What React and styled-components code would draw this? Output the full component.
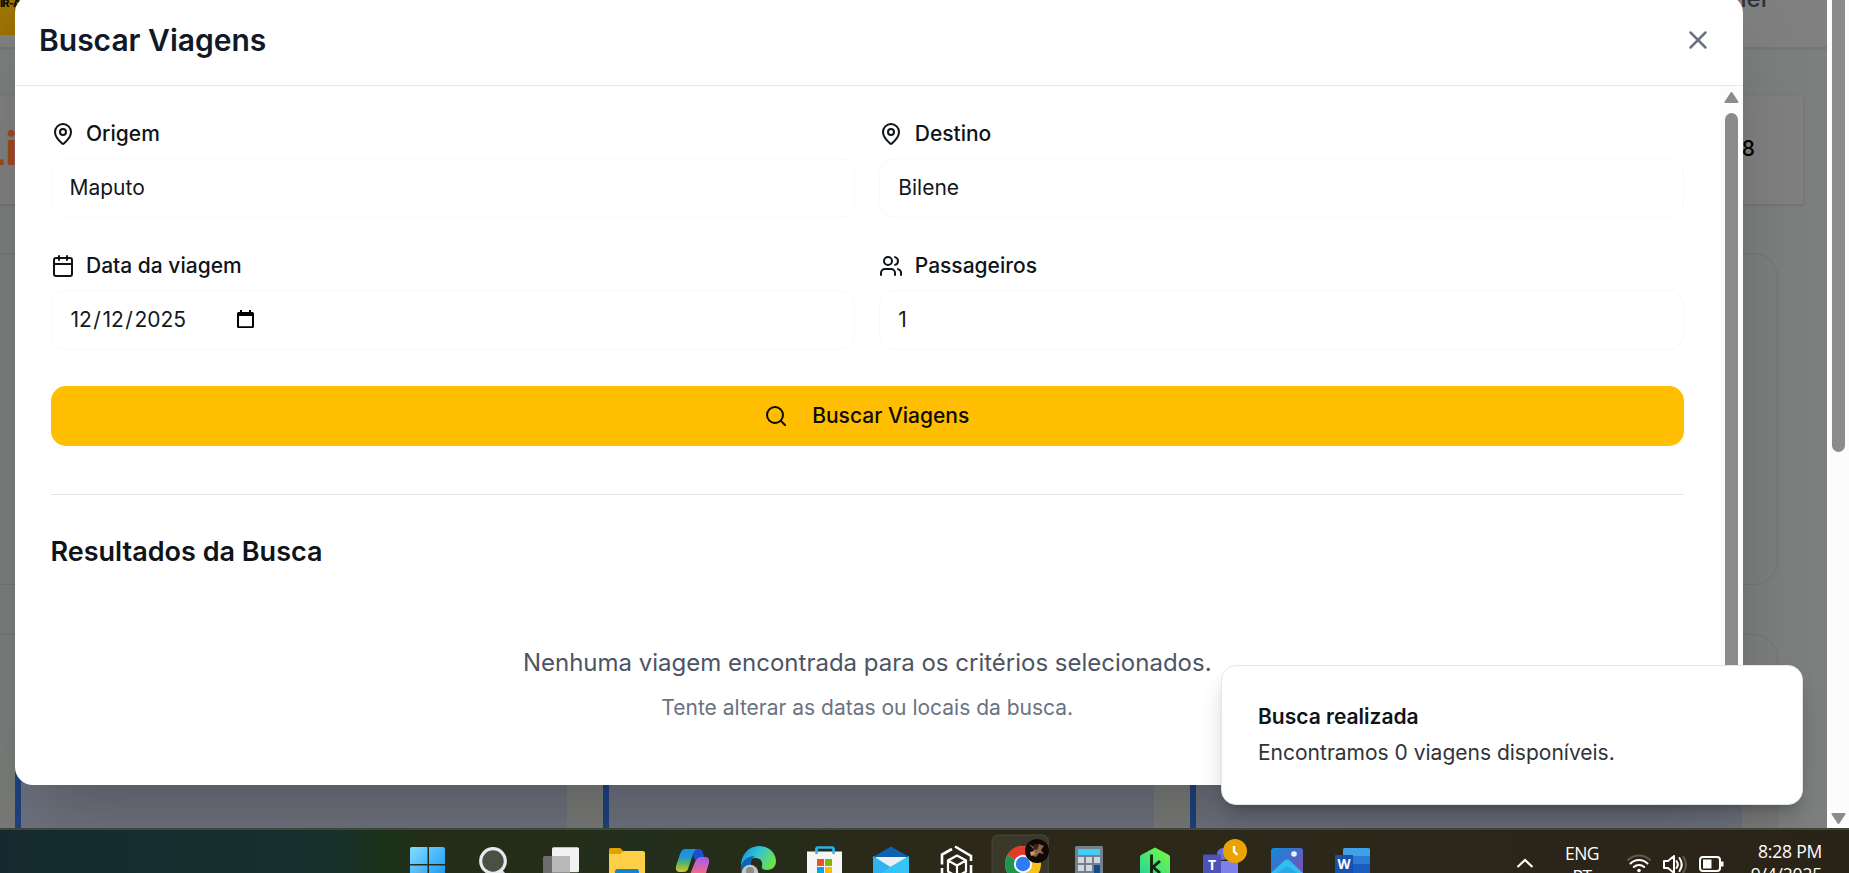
import React from "react";
import styled, { createGlobalStyle } from "styled-components";
import { MapPin, Calendar, Users, Search, X } from "lucide-react";

const GlobalStyle = createGlobalStyle`
  *, *::before, *::after { box-sizing: border-box; }
  html, body { margin: 0; padding: 0; overflow: hidden; }
  body { font-family: Inter, "Liberation Sans", sans-serif; color: #0f1419; background: #7c7f7d; }
  h2, h3, p { margin: 0; }
`;

const Desktop = styled.div`
  position: relative;
  display: flex;
  flex-direction: column;
  width: 1849px;
  height: 873px;
  overflow: hidden;
`;

const BrowserView = styled.div`
  position: relative;
  display: flex;
  height: 828px;
  overflow: hidden;
`;

/* ---------- dimmed page behind the dialog ---------- */

const Page = styled.main`
  display: flex;
  flex-direction: column;
  flex: 1;
  height: 828px;
  background: #7c7f7d;
  overflow: hidden;
`;

const SiteHeader = styled.header`
  display: flex;
  justify-content: space-between;
  flex: none;
  height: 48px;
  background: #808080;
  border-bottom: 1px solid #757776;
  box-shadow: 0 1px 2px rgba(0, 0, 0, 0.1);
`;

const BrandStrip = styled.div`
  display: flex;
  width: 40px;
  height: 35px;
  background: linear-gradient(120deg, #a07808, #946800);
  color: #140e00;
  font-size: 11px;
  font-weight: 800;
  line-height: 6px;
  letter-spacing: -0.8px;
  overflow: hidden;
`;

const HeaderUser = styled.span`
  margin-right: 57px;
  margin-top: -14px;
  height: 30px;
  font-size: 24px;
  font-weight: 500;
  line-height: 26px;
  color: #303131;
`;

const StatCard = styled.section`
  display: flex;
  align-items: center;
  justify-content: space-between;
  flex: none;
  height: 108px;
  margin: 48px 24px 49px -30px;
  padding: 0 48px 3px 10px;
  background: #808080;
  box-shadow: 0 1px 3px rgba(0, 0, 0, 0.14);
`;

const StatTitle = styled.span`
  font-size: 45px;
  font-weight: 700;
  line-height: 60px;
  letter-spacing: -0.3px;
  color: #a3491a;
`;

const StatValue = styled.span`
  font-size: 21px;
  font-weight: 500;
  color: #000;
`;

const Panel = styled.section`
  flex: none;
  height: ${(p) => p.$height}px;
  margin: 0 49px 49px -30px;
  border: 1px solid #737574;
  border-radius: 24px;
`;

const TripPanel = styled(Panel)`
  display: flex;
  align-items: flex-end;
  gap: 36px;
  padding-left: 44px;
  background: linear-gradient(#7c7f7d 40%, #787976);
`;

const TripCard = styled.div`
  flex: none;
  width: ${(p) => p.$width}px;
  height: 180px;
  border-left: 6px solid #1e427e;
  background: #6e727e;
`;

/* ---------- scrollbars ---------- */

const Scrollbar = styled.div`
  display: flex;
  flex-direction: column;
  align-items: center;
  justify-content: space-between;
  flex: none;
  width: ${(p) => p.$width}px;
  padding: ${(p) => p.$padding};
  background: #fcfcfc;
`;

const Thumb = styled.div`
  width: 13px;
  height: ${(p) => p.$height}px;
  border-radius: ${(p) => p.$radius};
  background: #8b8b8b;
`;

/* ---------- dialog ---------- */

const Dialog = styled.div`
  position: absolute;
  left: 15px;
  top: -5px;
  display: flex;
  flex-direction: column;
  width: 1728px;
  height: 790px;
  border-radius: 18px;
  background: #fff;
  box-shadow: 0 37px 75px -18px rgba(0, 0, 0, 0.25);
  overflow: hidden;
`;

const DialogHeader = styled.header`
  display: flex;
  align-items: center;
  justify-content: space-between;
  flex: none;
  height: 91px;
  padding: 0 30px 0 24px;
  border-bottom: 1px solid #e5e7eb;
`;

const DialogTitle = styled.h2`
  font-size: 30px;
  font-weight: 600;
  line-height: 42px;
  color: #111827;
`;

const CloseButton = styled.button`
  display: flex;
  padding: 0;
  border: 0;
  background: none;
  color: #6b7280;
`;

const DialogBody = styled.div`
  display: flex;
  flex: 1;
  min-height: 0;
`;

const DialogContent = styled.div`
  flex: 1;
  padding: 36px 36px 0 35.5px;
`;

const Form = styled.form`
  display: grid;
  grid-template-columns: 1fr 1fr;
  gap: 36px 24px;
`;

const Field = styled.div`
  display: flex;
  flex-direction: column;
  gap: 12px;
`;

const Label = styled.label`
  display: flex;
  align-items: center;
  gap: 11.5px;
  height: 24px;
  font-size: 21px;
  font-weight: 500;
  line-height: 24px;
`;

const Input = styled.div`
  display: flex;
  align-items: center;
  height: 60px;
  padding: 0 18px;
  border: 1px solid #f7f8f9;
  border-radius: 15px;
  font-size: 21px;
  line-height: 30px;
  color: #14181d;
`;

const DateText = styled.span`
  width: 166px;
  margin-left: 1px;
  white-space: nowrap;
`;

const Slash = styled.span`
  margin: 0 1.5px;
`;

const PickerIcon = styled.svg`
  margin-bottom: 2px;
`;

const SubmitButton = styled.button`
  display: flex;
  align-items: center;
  justify-content: center;
  gap: 24px;
  grid-column: 1 / -1;
  height: 60px;
  padding: 0 7px 0 6px;
  border: 0;
  border-radius: 15px;
  background: #ffbf00;
  color: #0c0a02;
  font: 500 21px/30px Inter, "Liberation Sans", sans-serif;
`;

const Results = styled.section`
  margin-top: 48px;
  padding-top: 36px;
  border-top: 1px solid #e1e8ed;
`;

const ResultsTitle = styled.h3`
  font-size: 27px;
  font-weight: 600;
  line-height: 42px;
`;

const EmptyState = styled.div`
  display: flex;
  flex-direction: column;
  align-items: center;
  gap: 12px;
  padding-top: 72px;
`;

const EmptyTitle = styled.p`
  font-size: 24px;
  line-height: 36px;
  color: #4b5563;
`;

const EmptyHint = styled.p`
  font-size: 21px;
  line-height: 30px;
  color: #6b7280;
`;

/* ---------- toast ---------- */

const Toast = styled.div`
  position: absolute;
  left: 1221px;
  top: 665px;
  display: flex;
  flex-direction: column;
  justify-content: center;
  gap: 6px;
  width: 582px;
  height: 140px;
  padding: 0 36px;
  border: 1px solid #e1e8ed;
  border-radius: 15px;
  background: #fff;
  box-shadow: 0 15px 23px -4px rgba(0, 0, 0, 0.2), 0 6px 9px -6px rgba(0, 0, 0, 0.2);
  font-size: 21px;
  line-height: 30px;
`;

const ToastTitle = styled.p`
  font-weight: 600;
`;

const ToastText = styled.p`
  color: #2e3338;
`;

/* ---------- taskbar ---------- */

const Taskbar = styled.footer`
  display: flex;
  justify-content: space-between;
  align-items: flex-start;
  flex: none;
  height: 45px;
  padding: 4px 27px 0 395px;
  border-top: 2px solid #41463a;
  background: linear-gradient(90deg, #142a30 0, #15302d 280px, #18312a 340px, #1b3319 385px, #252c1a 430px, #222f1b 640px, #2b291a 900px, #2c281a 1250px, #2a2318 1849px);
  overflow: hidden;
`;

const AppList = styled.div`
  display: flex;
`;

const AppSlot = styled.div`
  width: 66px;
  height: 39px;
  & > svg { display: block; }
`;

const Tray = styled.div`
  display: flex;
  align-items: flex-start;
  color: #fff;
  font-family: "Open Sans", "Noto Sans", sans-serif;
  font-size: 17.5px;
  line-height: 23px;
`;

const TrayText = styled.div`
  display: flex;
  flex-direction: column;
  align-items: ${(p) => p.$align};
  width: ${(p) => p.$width}px;
  margin-top: ${(p) => p.$top}px;
  letter-spacing: ${(p) => p.$spacing}px;
  white-space: nowrap;
`;

const taskbarApps = [
  {
    name: "start",
    art: (
      <>
        <defs>
          <linearGradient id="win" x1="0" y1="0" x2="1" y2="1">
            <stop offset="0" stopColor="#86dcff" />
            <stop offset="1" stopColor="#0a93f5" />
          </linearGradient>
        </defs>
        <path fill="url(#win)" d="M17 13h15.500v17H15v-15a2 2 0 0 1 2-2zM34 13h14a2 2 0 0 1 2 2v15H34zM15 31.500h17.500v17.500H15zM34 31.500h16v17.500H34z" />
      </>
    ),
  },
  {
    name: "search",
    art: (
      <>
        <path d="M38 36l8 9" stroke="#dfe2e6" strokeWidth="5" />
        <circle cx="32" cy="27" r="12.300" fill="#4b5142" stroke="#e6e9ed" strokeWidth="3.200" />
      </>
    ),
  },
  {
    name: "tasks",
    art: (
      <>
        <rect x="25" y="13.300" width="27" height="25" rx="1.500" fill="#f2f2f2" />
        <rect x="16" y="22" width="27" height="25" rx="1.500" fill="#6c6c6c" />
        <path d="M25 22h18v16.500H25z" fill="#b9b9b9" />
      </>
    ),
  },
  {
    name: "files",
    art: (
      <>
        <path d="M16 15.500a1.500 1.500 0 0 1 1.500-1.500h9.500l4 3.500-3 5H16z" fill="#e0a106" />
        <path d="M16 20h11l4-3h19a2 2 0 0 1 2 2v26H16z" fill="#ffcf48" />
        <path d="M22 39v-1.500a2.500 2.500 0 0 1 2.500-2.500h19a2.500 2.500 0 0 1 2.500 2.500V39z" fill="#1683d0" />
      </>
    ),
  },
  {
    name: "copilot",
    art: (
      <>
        <defs>
          <linearGradient id="cpA" x1="0" y1="0" x2="0" y2="1">
            <stop offset="0" stopColor="#1591ec" />
            <stop offset="0.350" stopColor="#2196cf" />
            <stop offset="0.650" stopColor="#5eb85c" />
            <stop offset="1" stopColor="#e3c42c" />
          </linearGradient>
          <linearGradient id="cpB" x1="0" y1="0" x2="0" y2="1">
            <stop offset="0" stopColor="#a25bf0" />
            <stop offset="1" stopColor="#ff7273" />
          </linearGradient>
        </defs>
        <path d="M30 15h10q3 0 4 4l1.500 4.500H41q-3 0-5 3l-2-6z" fill="#1c4fcc" />
        <path d="M26 15h12q-3 1-4 5l-5 15q-1 3-5 3h-3q-5 0-4-6l4-12q2-5 5-5z" fill="url(#cpA)" />
        <path d="M42 23h4q5 0 4 6l-3 10q-1 4-4 4H26q5-1 6-5l4-10q2-5 6-5z" fill="url(#cpB)" />
      </>
    ),
  },
  {
    name: "edge",
    art: (
      <>
        <defs>
          <linearGradient id="edge" x1="0" y1="0" x2="1" y2="0.400">
            <stop offset="0" stopColor="#128bd8" />
            <stop offset="0.500" stopColor="#30c2d8" />
            <stop offset="1" stopColor="#69e04e" />
          </linearGradient>
        </defs>
        <path d="M16 32a18 19 0 0 1 18-20c11 0 17 8 17 15 0 6-4 9-9 9-4 0-6-2-5-4 1-5-2-8-7-8-7 0-12 5-14 10z" fill="url(#edge)" />
        <path d="M16 31c3-6 8-9 14-9-5 3-5 9-2 20H16z" fill="#0b66b4" />
        <circle cx="25" cy="39" r="8.300" fill="#c5c5c5" />
        <circle cx="25" cy="37" r="4" fill="#8c8c8c" />
      </>
    ),
  },
  {
    name: "store",
    art: (
      <>
        <path d="M25.500 20v-5.500a1 1 0 0 1 1-1h15a1 1 0 0 1 1 1V20" fill="none" stroke="#27b3ea" strokeWidth="2.400" />
        <path d="M16 17.500h35V42H16z" fill="#f6f6f6" />
        <path d="M25.500 14v6M42.500 14v6" stroke="#27b3ea" strokeWidth="2.400" />
        <path fill="#f25022" d="M26 25h7v7h-7z" />
        <path fill="#7fba00" d="M34 25h7v7h-7z" />
        <path fill="#00a4ef" d="M26 33h7v7h-7z" />
        <path fill="#ffb900" d="M34 33h7v7h-7z" />
      </>
    ),
  },
  {
    name: "mail",
    art: (
      <>
        <path d="M16 23l18-10.500L52 23v18H16z" fill="#0b62b3" />
        <path d="M19 23h30v16H19z" fill="#eceff3" />
        <path d="M16 22l19 12-12 8h-7z" fill="#2fb4ef" />
        <path d="M52 22L33 33 20 42h32z" fill="#36c3f5" />
      </>
    ),
  },
  {
    name: "cube",
    art: (
      <g fill="none" stroke="#fff" strokeWidth="2.600">
        <path d="M32 12.500l16 9.500v5M48 31v10M29 15L19 20.500v10M19 34v7" />
        <path d="M34 21.500l9 5v11l-9 5-9-5v-11zM25 26.500l9 5 9-5M34 31.500v11" strokeWidth="2.200" />
      </g>
    ),
  },
  {
    name: "chrome",
    art: (
      <>
        <path d="M4 39V7a6 6 0 0 1 6-6h42a6 6 0 0 1 6 6v32" transform="translate(-1 0) scale(1.040 1)" fill="#3a3829" stroke="#4a4939" />
        <circle cx="34" cy="30" r="18" fill="#fbc11a" />
        <path d="M34 30L18.400 21A18 18 0 0 1 49.600 21z" fill="#e23b2e" />
        <path d="M34 30L18.400 21A18 18 0 0 0 34 48z" fill="#209550" />
        <circle cx="34" cy="30" r="9.200" fill="#f4f7fb" />
        <circle cx="34" cy="30" r="7.200" fill="#2f7cf0" />
        <circle cx="48" cy="17" r="12" fill="#100907" />
        <path d="M40 10l5 3 5-3 5 2-3 4 3 4-5-1-3 4-5-2 3-5z" fill="#8d6549" />
        <path d="M45 10l5 1-2 5-4-1z" fill="#3d241a" />
        <path d="M41 18l4-1 1 3-4 2z" fill="#c59a78" />
      </>
    ),
  },
  {
    name: "calculator",
    art: (
      <>
        <rect x="20" y="12" width="28" height="34" rx="1.500" fill="#76808b" />
        <path d="M23 15h22v6H23z" fill="#3ecdf5" />
        <path d="M23 23h6v6h-6zM31 23h6v6h-6zM39 23h6v6h-6zM23 31h6v6h-6zM31 31h6v6h-6z" fill="#d0d7de" />
        <path d="M39 31h6v8h-6z" fill="#0f4d90" />
      </>
    ),
  },
  {
    name: "kilo",
    art: (
      <>
        <defs>
          <linearGradient id="kilo" x1="0" y1="1" x2="1" y2="0">
            <stop offset="0" stopColor="#22d3a0" />
            <stop offset="1" stopColor="#7cfb3a" />
          </linearGradient>
        </defs>
        <path d="M34 13.500l14 7.500q1 1 1 2v20H19V23q0-1 1-2z" fill="url(#kilo)" />
        <path d="M30.500 20.500v20M39 27l-7 6 7 6" fill="none" stroke="#13240f" strokeWidth="2.900" />
      </>
    ),
  },
  {
    name: "teams",
    art: (
      <>
        <circle cx="36" cy="20" r="6" fill="#6a6ed6" />
        <path d="M28 27h23v14H28z" fill="#7d82ea" />
        <path d="M16 21.500a1 1 0 0 1 1-1h17v20H16z" fill="#4c52b8" />
        <text x="25" y="35.500" textAnchor="middle" fontSize="14" fontWeight="700" fontFamily="Open Sans, sans-serif" fill="#fff">T</text>
        <circle cx="48" cy="17" r="12" fill="#eaa300" />
        <path d="M47 12v5.500l3.500 3.500" fill="none" stroke="#fff" strokeWidth="2.400" />
      </>
    ),
  },
  {
    name: "photos",
    art: (
      <>
        <defs>
          <linearGradient id="photo" x1="0" y1="0" x2="1" y2="1">
            <stop offset="0" stopColor="#0d8be0" />
            <stop offset="1" stopColor="#8a49a8" />
          </linearGradient>
        </defs>
        <rect x="18" y="14" width="32" height="32" rx="3" fill="url(#photo)" />
        <path d="M18 39l13.500-12.500q2.500-2 5 0L50 39z" fill="#2fc0f2" />
        <path d="M24 39l8-6q2-1 4 0l8 6z" fill="#2aa7ea" />
        <circle cx="41" cy="20" r="2.800" fill="#e9f3fb" />
      </>
    ),
  },
  {
    name: "word",
    art: (
      <>
        <path d="M24 15.500a1.500 1.500 0 0 1 1.500-1.500h24a1.500 1.500 0 0 1 1.500 1.500V22H24z" fill="#41a0ea" />
        <path d="M24 22h27v8H24z" fill="#2a7cd5" />
        <path d="M24 30h27v9H24z" fill="#1b5dbe" />
        <path d="M16 22a1 1 0 0 1 1-1h17v20H16z" fill="#1750b0" />
        <text x="25" y="35" textAnchor="middle" fontSize="13.500" fontWeight="700" fontFamily="Open Sans, sans-serif" fill="#fff">W</text>
      </>
    ),
  },
];

function TrayIcons() {
  return (
    <svg width="102" height="39" viewBox="0 0 102 39" fill="none" stroke="#fff" strokeWidth="2">
      <g strokeLinecap="round">
        <path d="M2 26a15.500 15.500 0 0 1 22 0" stroke="#5d5a4c" />
        <path d="M4.500 29.500a12 12 0 0 1 17 0M7.800 33a7.500 7.500 0 0 1 10.400 0" />
        <circle cx="13" cy="36.500" r="1.800" fill="#fff" stroke="none" />
      </g>
      <path d="M38 27h4l6-5v17l-6-5h-4z" strokeLinejoin="round" />
      <path d="M50.500 27q2.500 3.500 0 7M53.500 24q4.500 6.500 0 13" strokeLinecap="round" />
      <path d="M57 22q6 9 0 17" stroke="#5d5a4c" />
      <rect x="74" y="23" width="20" height="14" rx="3" />
      <path d="M77 25.500h8.500v9H77z" fill="#fff" stroke="none" />
      <path d="M96 27.500v5" strokeWidth="3" />
    </svg>
  );
}

export default function App() {
  return (
    <>
      <GlobalStyle />
      <Desktop>
        <BrowserView>
          <Page>
            <SiteHeader>
              <BrandStrip>IR-A</BrandStrip>
              <HeaderUser>Xavier</HeaderUser>
            </SiteHeader>
            <StatCard>
              <StatTitle>Li</StatTitle>
              <StatValue>8</StatValue>
            </StatCard>
            <Panel $height={332} />
            <TripPanel $height={220}>
              <TripCard $width={552} />
              <TripCard $width={551} />
              <TripCard $width={552} />
            </TripPanel>
          </Page>
          <Scrollbar $width={22} $padding="0 0 4px">
            <Thumb $height={452} $radius="0 0 7px 7px" />
            <svg width="15" height="11" viewBox="0 0 15 11">
              <path d="M1.500 1h12l-6 9z" fill="#8b8b8b" stroke="#8b8b8b" strokeWidth="2" strokeLinejoin="round" />
            </svg>
          </Scrollbar>

          <Dialog>
            <DialogHeader>
              <DialogTitle>Buscar Viagens</DialogTitle>
              <CloseButton aria-label="Fechar">
                <X size={30} />
              </CloseButton>
            </DialogHeader>
            <DialogBody>
              <DialogContent>
                <Form>
                  <Field>
                    <Label><MapPin size={24} />Origem</Label>
                    <Input>Maputo</Input>
                  </Field>
                  <Field>
                    <Label><MapPin size={24} />Destino</Label>
                    <Input>Bilene</Input>
                  </Field>
                  <Field>
                    <Label><Calendar size={24} />Data da viagem</Label>
                    <Input>
                      <DateText>12<Slash>/</Slash>12<Slash>/</Slash>2025</DateText>
                      <PickerIcon width="17" height="20" viewBox="0 0 17 20">
                        <path d="M3 1h2v2h7V1h2v2h1.500A1.500 1.500 0 0 1 17 4.500v13a1.500 1.500 0 0 1-1.500 1.500h-14A1.500 1.500 0 0 1 0 17.500v-13A1.500 1.500 0 0 1 1.500 3H3zM2 7v10.300h13V7z" fill="#000" fillRule="evenodd" />
                      </PickerIcon>
                    </Input>
                  </Field>
                  <Field>
                    <Label><Users size={24} />Passageiros</Label>
                    <Input>1</Input>
                  </Field>
                  <SubmitButton type="button">
                    <Search size={24} />
                    Buscar Viagens
                  </SubmitButton>
                </Form>
                <Results>
                  <ResultsTitle>Resultados da Busca</ResultsTitle>
                  <EmptyState>
                    <EmptyTitle>Nenhuma viagem encontrada para os critérios selecionados.</EmptyTitle>
                    <EmptyHint>Tente alterar as datas ou locais da busca.</EmptyHint>
                  </EmptyState>
                </Results>
              </DialogContent>
              <Scrollbar $width={23} $padding="6px 0 0">
                <svg width="15" height="11" viewBox="0 0 15 11">
                  <path d="M1.500 10h12l-6-9z" fill="#8b8b8b" stroke="#8b8b8b" strokeWidth="2" strokeLinejoin="round" />
                </svg>
                <Thumb $height={672} $radius="7px 7px 0 0" />
              </Scrollbar>
            </DialogBody>
          </Dialog>

          <Toast>
            <ToastTitle>Busca realizada</ToastTitle>
            <ToastText>Encontramos 0 viagens disponíveis.</ToastText>
          </Toast>
        </BrowserView>

        <Taskbar>
          <AppList>
            {taskbarApps.map((app) => (
              <AppSlot key={app.name}>
                <svg width="66" height="39" viewBox="0 0 66 39">{app.art}</svg>
              </AppSlot>
            ))}
          </AppList>
          <Tray>
            <svg width="48" height="39" viewBox="0 0 48 39">
              <path d="M1.500 33l7.500-7 7.500 7" fill="none" stroke="#fff" strokeWidth="2.200" />
            </svg>
            <TrayText $align="center" $width={36} $top={7.5} $spacing={-0.5}>
              <span>ENG</span>
              <span>PT</span>
            </TrayText>
            <svg width="26" height="39" />
            <TrayIcons />
            <TrayText $align="flex-end" $width={94} $top={5.5} $spacing={-0.2}>
              <span>8:28 PM</span>
              <span>9/4/2025</span>
            </TrayText>
          </Tray>
        </Taskbar>
      </Desktop>
    </>
  );
}
